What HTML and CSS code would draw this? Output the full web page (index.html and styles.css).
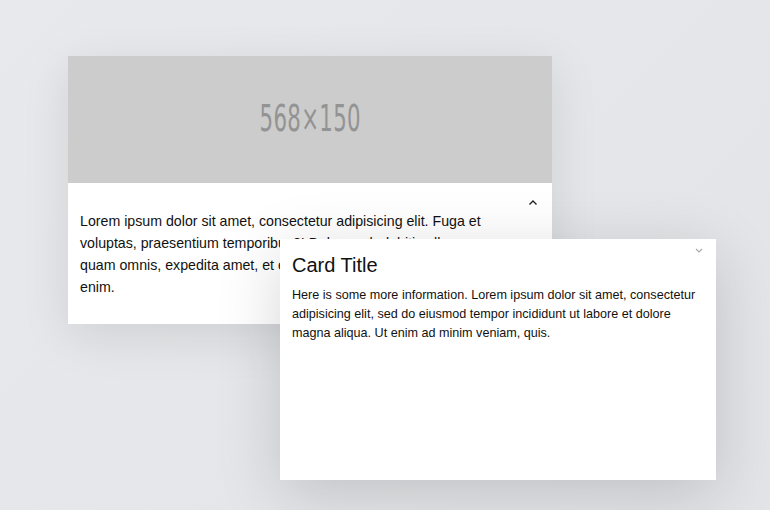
FILE: index.html
```html
<!DOCTYPE html>
<html>
<head>
<meta charset="utf-8">
<link rel="stylesheet" href="styles.css">
</head>
<body>
<div class="canvas">
  <div class="card card-main">
    <div class="placeholder"><span class="ph-text">568×150</span></div>
    <div class="card-body">
      <svg class="chev chev-up" width="10" height="7" viewBox="0 0 10 7"><path d="M1.5 5.5 L5 2 L8.5 5.5" fill="none" stroke="#222" stroke-width="1.4"/></svg>
      <p class="main-text">Lorem ipsum dolor sit amet, consectetur adipisicing elit. Fuga et<br>voluptas, praesentium temporibus?! Dolores ab debitis ullam<br>quam omnis, expedita amet, et eveniet eius dolor ex voluptatem<br>enim.</p>
    </div>
  </div>
  <div class="card card-float">
    <svg class="chev chev-down" width="10" height="7" viewBox="0 0 10 7"><path d="M2 2 L5 5 L8 2" fill="none" stroke="#aaa" stroke-width="1.2"/></svg>
    <h2 class="title">Card Title</h2>
    <p class="float-text">Here is some more information. Lorem ipsum dolor sit amet, consectetur adipisicing elit, sed do eiusmod tempor incididunt ut labore et dolore magna aliqua. Ut enim ad minim veniam, quis.</p>
  </div>
</div>
</body>
</html>
```
FILE: styles.css
```css
html, body {
  margin: 0;
  padding: 0;
}
body {
  width: 770px;
  height: 510px;
  overflow: hidden;
  background: linear-gradient(135deg, #e8e9ec 0%, #e3e4e8 100%);
  font-family: "Liberation Sans", Arial, sans-serif;
  color: #111;
}
.canvas {
  position: relative;
  width: 770px;
  height: 510px;
  padding: 56px 0 0 68px;
  box-sizing: border-box;
}
.card {
  background: #fff;
}
.card-main {
  width: 484px;
  height: 268px;
  box-shadow: 0 12px 45px rgba(0, 0, 0, 0.10);
  display: flex;
  flex-direction: column;
}
.placeholder {
  height: 127px;
  background: #cccccc;
  display: flex;
  align-items: center;
  justify-content: center;
}
.ph-text {
  font-family: "Liberation Sans Narrow", "DejaVu Sans Condensed", sans-serif;
  font-size: 37px;
  color: #939393;
  letter-spacing: 0.5px;
  transform: scaleX(0.64);
  margin-top: -2px;
}
.card-body {
  position: relative;
  padding: 27px 12px 0 12px;
}
.chev {
  position: absolute;
  display: block;
}
.chev-up {
  right: 14px;
  top: 16px;
}
.main-text {
  margin: 0;
  font-size: 14.2px;
  line-height: 22px;
  white-space: nowrap;
}
.card-float {
  position: absolute;
  left: 280px;
  top: 239px;
  width: 436px;
  height: 241px;
  box-sizing: border-box;
  padding: 13px 12px 0 12px;
  box-shadow: 0 14px 60px rgba(0, 0, 0, 0.16);
}
.chev-down {
  right: 12px;
  top: 8px;
}
.title {
  margin: 0;
  font-weight: normal;
  font-size: 20px;
  line-height: 26px;
}
.float-text {
  margin: 8px 0 0 0;
  font-size: 12.6px;
  line-height: 19px;
}
```
